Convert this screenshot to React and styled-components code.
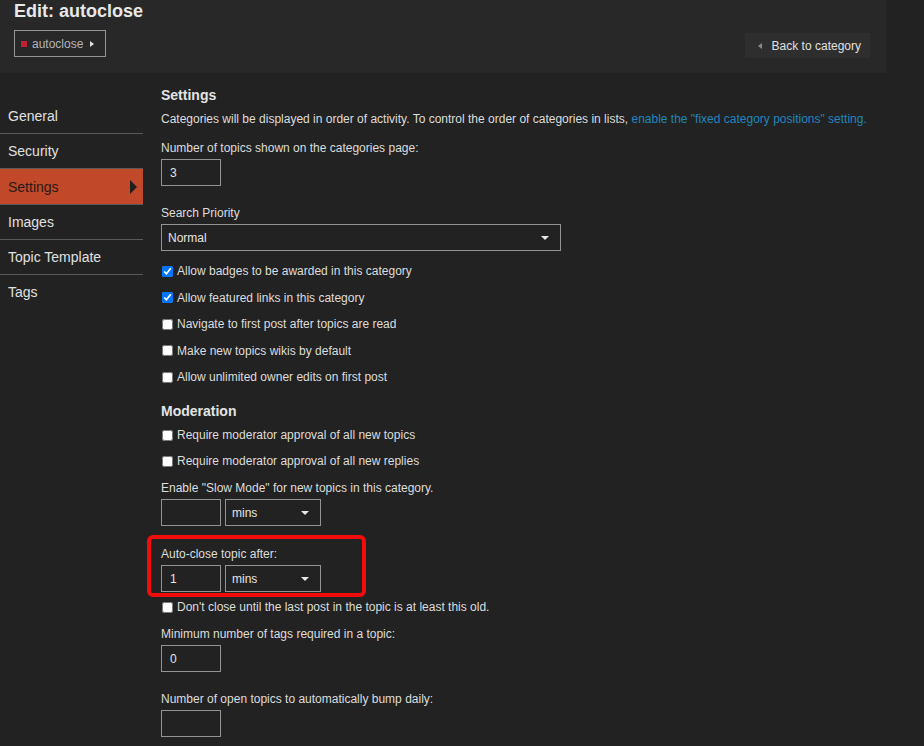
import React from 'react';
import styled, { createGlobalStyle } from 'styled-components';

const GlobalStyle = createGlobalStyle`
  html, body {
    margin: 0;
    padding: 0;
    background: #222222;
  }
  body {
    font-family: "Liberation Sans", Arial, sans-serif;
    color: #dddddd;
  }
`;

const Page = styled.div`
  width: 924px;
  min-height: 746px;
  background: #222222;
  overflow: hidden;
`;

const Header = styled.header`
  width: 886px;
  height: 73px;
  box-sizing: border-box;
  background: #282828;
  padding: 0 16px 0 14px;
`;

const Title = styled.h1`
  margin: 0;
  font-size: 18px;
  line-height: 22px;
  font-weight: bold;
  color: #e8e8e8;
`;

const HeaderRow = styled.div`
  display: flex;
  justify-content: space-between;
  align-items: flex-end;
  margin-top: 8px;
`;

const Crumb = styled.div`
  display: flex;
  align-items: center;
  height: 27px;
  box-sizing: border-box;
  border: 1px solid #959595;
  padding: 0 11px 0 6px;
  font-size: 12px;
  color: #b4b4be;
`;

const Swatch = styled.span`
  width: 6px;
  height: 6px;
  background: #c0202f;
  margin-right: 5px;
`;

const Caret = styled.span`
  width: 0;
  height: 0;
  border-style: solid;
  ${p =>
    p.dir === 'left'
      ? `border-width: 3.5px 4px 3.5px 0; border-color: transparent ${p.color} transparent transparent;`
      : `border-width: 3.5px 0 3.5px 4px; border-color: transparent transparent transparent ${p.color};`}
  margin: ${p => p.margin};
`;

const BackButton = styled.button`
  display: flex;
  align-items: center;
  height: 25px;
  margin-bottom: -1px;
  padding: 0 9px 0 13px;
  border: none;
  background: #2e2e2e;
  color: #e0e0e0;
  font-family: inherit;
  font-size: 12px;
`;

const Body = styled.div`
  display: flex;
  align-items: flex-start;
`;

const Sidebar = styled.nav`
  width: 143px;
  margin-top: 26px;
`;

const NavItem = styled.div`
  display: flex;
  align-items: center;
  justify-content: space-between;
  height: ${p => (p.active ? '35px' : '34px')};
  padding: 0 6px 0 8px;
  font-size: 14px;
  color: ${p => (p.active ? '#2a1a14' : '#e0e0e0')};
  background: ${p => (p.active ? '#c1492a' : 'transparent')};
  border-bottom: ${p => (p.last ? 'none' : '1px solid #5a5a5a')};
`;

const ActiveArrow = styled.span`
  width: 0;
  height: 0;
  border-style: solid;
  border-width: 7px 0 7px 7px;
  border-color: transparent transparent transparent #1e1e1e;
`;

const Content = styled.main`
  margin-left: 18px;
  padding-top: 14px;
  width: 720px;
`;

const SectionTitle = styled.h2`
  margin: ${p => p.margin || '0'};
  font-size: 14px;
  line-height: 17px;
  font-weight: bold;
  color: #e4e4e4;
`;

const Description = styled.p`
  margin: 7px 0 13px;
  font-size: 12px;
  line-height: 16px;
  white-space: nowrap;
  color: #dddddd;
`;

const Link = styled.a`
  color: #2085bd;
  text-decoration: none;
`;

const Field = styled.div`
  position: relative;
  margin-bottom: ${p => p.gap || '19px'};
`;

const Label = styled.div`
  font-size: 12px;
  line-height: 16px;
  margin-bottom: 3px;
  color: #dddddd;
`;

const Controls = styled.div`
  display: flex;
  gap: 4px;
`;

const TextInput = styled.div`
  width: 60px;
  height: 27px;
  box-sizing: border-box;
  border: 1px solid #939393;
  padding-left: 8px;
  display: flex;
  align-items: center;
  font-size: 12px;
  color: #e4e4e4;
`;

const Select = styled.div`
  width: ${p => p.width};
  height: 27px;
  box-sizing: border-box;
  border: 1px solid #939393;
  padding: 0 11px 0 6px;
  display: flex;
  align-items: center;
  justify-content: space-between;
  font-size: 12px;
  color: #e4e4e4;
`;

const DownCaret = styled.span`
  width: 0;
  height: 0;
  border-style: solid;
  border-width: 4px 4px 0 4px;
  border-color: #e8e8e8 transparent transparent transparent;
`;

const CheckRow = styled.label`
  display: flex;
  align-items: center;
  height: ${p => p.h || '26px'};
  font-size: 12px;
  color: #dddddd;
`;

const Check = styled.input`
  width: 11px;
  height: 11px;
  margin: 0 4px 0 1px;
`;

const Highlight = styled.div`
  position: absolute;
  left: -14px;
  top: -11px;
  width: 219px;
  height: 62px;
  box-sizing: border-box;
  border: 4px solid #f20d0d;
  border-radius: 6px;
  pointer-events: none;
`;

const navItems = ['General', 'Security', 'Settings', 'Images', 'Topic Template', 'Tags'];

const generalChecks = [
  ['Allow badges to be awarded in this category', true],
  ['Allow featured links in this category', true],
  ['Navigate to first post after topics are read', false],
  ['Make new topics wikis by default', false],
  ['Allow unlimited owner edits on first post', false]
];

const moderationChecks = [
  'Require moderator approval of all new topics',
  'Require moderator approval of all new replies'
];

const Checkbox = ({ text, checked, h }) => (
  <CheckRow h={h}>
    <Check type="checkbox" defaultChecked={checked} />
    {text}
  </CheckRow>
);

const DurationField = ({ value }) => (
  <Controls>
    <TextInput>{value}</TextInput>
    <Select width="96px">
      mins
      <DownCaret />
    </Select>
  </Controls>
);

const App = () => (
  <Page>
    <GlobalStyle />
    <Header>
      <Title>Edit: autoclose</Title>
      <HeaderRow>
        <Crumb>
          <Swatch />
          autoclose
          <Caret color="#e0e0e0" margin="0 0 0 7px" />
        </Crumb>
        <BackButton>
          <Caret dir="left" color="#8a8a8a" margin="0 10px 0 0" />
          Back to category
        </BackButton>
      </HeaderRow>
    </Header>
    <Body>
      <Sidebar>
        {navItems.map((item, index) => (
          <NavItem
            key={item}
            active={item === 'Settings'}
            last={index === navItems.length - 1}>
            {item}
            {item === 'Settings' && <ActiveArrow />}
          </NavItem>
        ))}
      </Sidebar>
      <Content>
        <SectionTitle>Settings</SectionTitle>
        <Description>
          Categories will be displayed in order of activity. To control the order of
          categories in lists,{' '}
          <Link href="#">enable the "fixed category positions" setting.</Link>
        </Description>
        <Field>
          <Label>Number of topics shown on the categories page:</Label>
          <TextInput>3</TextInput>
        </Field>
        <Field gap="7px">
          <Label>Search Priority</Label>
          <Select width="400px">
            Normal
            <DownCaret />
          </Select>
        </Field>
        {generalChecks.map(([text, checked]) => (
          <Checkbox key={text} text={text} checked={checked} h="26.5px" />
        ))}
        <SectionTitle margin="12px 0 2.5px">Moderation</SectionTitle>
        {moderationChecks.map(text => (
          <Checkbox key={text} text={text} />
        ))}
        <Field gap="20px" style={{ marginTop: '6px' }}>
          <Label>Enable "Slow Mode" for new topics in this category.</Label>
          <DurationField value="" />
        </Field>
        <Field gap="2px">
          <Highlight />
          <Label>Auto-close topic after:</Label>
          <DurationField value="1" />
        </Field>
        <Checkbox text="Don't close until the last post in the topic is at least this old." />
        <Field style={{ marginTop: '6px' }}>
          <Label>Minimum number of tags required in a topic:</Label>
          <TextInput>0</TextInput>
        </Field>
        <Field>
          <Label>Number of open topics to automatically bump daily:</Label>
          <TextInput />
        </Field>
      </Content>
    </Body>
  </Page>
);

export default App;
